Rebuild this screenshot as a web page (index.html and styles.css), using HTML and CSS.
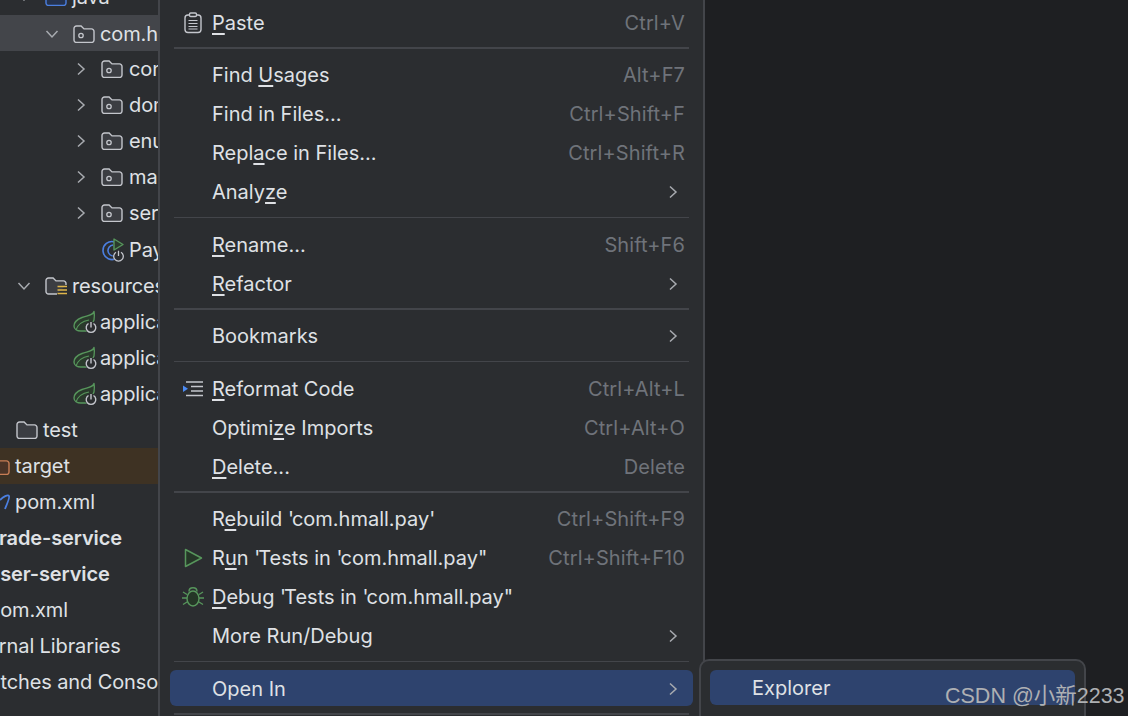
FILE: index.html
```html
<!DOCTYPE html>
<html lang="en">
<head>
<meta charset="utf-8">
<title>Open In menu</title>
<link rel="stylesheet" href="styles.css">
</head>
<body>
<svg class="defs" aria-hidden="true">
  <symbol id="folder" viewBox="0 0 22 18"><path d="M1 3.500a2.500 2.500 0 0 1 2.500-2.500h4.600l2.900 2.900h7.500a2.500 2.500 0 0 1 2.500 2.500v8.600a2.500 2.500 0 0 1-2.500 2.500H3.500a2.500 2.500 0 0 1-2.500-2.500z" fill="#3b3d42" stroke="#c4c6cc" stroke-width="1.400"/></symbol>
  <symbol id="pkg" viewBox="0 0 22 18"><path d="M1 3.500a2.500 2.500 0 0 1 2.500-2.500h4.600l2.900 2.900h7.500a2.500 2.500 0 0 1 2.500 2.500v8.600a2.500 2.500 0 0 1-2.500 2.500H3.500a2.500 2.500 0 0 1-2.500-2.500z" fill="#3b3d42" stroke="#c4c6cc" stroke-width="1.400"/><circle cx="8" cy="10.500" r="2.200" fill="none" stroke="#c4c6cc" stroke-width="1.300"/></symbol>
  <symbol id="spring" viewBox="0 0 24 24"><path d="M21 1.500c-1 4-7 4-12 6C4 9.500 1 12 1 16c0 3 3 5 7 5h6l4-5 3-6c.5-3 .5-6 0-8.500z" fill="#2a3a2c" stroke="#57965c" stroke-width="1.400" stroke-linejoin="round"/><path d="M3 20c2-6 7-9 13-10" fill="none" stroke="#57965c" stroke-width="1.200"/><circle cx="18" cy="17.500" r="6" fill="#2b2d30"/><path d="M15.500 13.500a4.800 4.800 0 1 0 5 0M18 12v5.500" fill="none" stroke="#c4c6cc" stroke-width="1.400"/></symbol>
  <symbol id="chev-r" viewBox="0 0 12 14"><path d="M3 1.500 9 7l-6 5.500" fill="none" stroke="#a8abb0" stroke-width="1.500"/></symbol>
  <symbol id="chev-d" viewBox="0 0 14 12"><path d="M1.500 3 7 9l5.500-6" fill="none" stroke="#a8abb0" stroke-width="1.500"/></symbol>
</svg>

<div class="window">
  <aside class="tree">
    <div class="tree-list">
      <div class="row l2"><svg class="chev"><use href="#chev-d"/></svg><svg class="ico" viewBox="0 0 22 18"><path d="M1 3.500a2.500 2.500 0 0 1 2.500-2.500h4.600l2.900 2.900h7.500a2.500 2.500 0 0 1 2.500 2.500v8.600a2.500 2.500 0 0 1-2.500 2.500H3.500a2.500 2.500 0 0 1-2.500-2.500z" fill="#25324d" stroke="#4b7fe0" stroke-width="1.400"/></svg><span>java</span></div>
      <div class="row l3 hover"><svg class="chev"><use href="#chev-d"/></svg><svg class="ico"><use href="#pkg"/></svg><span>com.hmall.pay</span></div>
      <div class="row l4"><svg class="chev-side"><use href="#chev-r"/></svg><svg class="ico"><use href="#pkg"/></svg><span>config</span></div>
      <div class="row l4"><svg class="chev-side"><use href="#chev-r"/></svg><svg class="ico"><use href="#pkg"/></svg><span>domain</span></div>
      <div class="row l4"><svg class="chev-side"><use href="#chev-r"/></svg><svg class="ico"><use href="#pkg"/></svg><span>enums</span></div>
      <div class="row l4"><svg class="chev-side"><use href="#chev-r"/></svg><svg class="ico"><use href="#pkg"/></svg><span>mapper</span></div>
      <div class="row l4"><svg class="chev-side"><use href="#chev-r"/></svg><svg class="ico"><use href="#pkg"/></svg><span>service</span></div>
      <div class="row l4">
        <svg class="ico ico-lg" viewBox="0 0 24 24"><path d="M14 4a9 9 0 1 0 2 16" fill="none" stroke="#4b7fe0" stroke-width="1.600"/><path d="M12 7a5.500 5.500 0 1 0 1 11" fill="none" stroke="#4b7fe0" stroke-width="1.600"/><path d="M13 1v11l9-5.500z" fill="#2a3a2c" stroke="#57965c" stroke-width="1.400" stroke-linejoin="round"/><circle cx="17.500" cy="18" r="5.800" fill="#2b2d30"/><path d="M15 14.200a4.800 4.800 0 1 0 5 0M17.500 12.700V18" fill="none" stroke="#c4c6cc" stroke-width="1.300"/></svg>
        <span>PayApplication</span></div>
      <div class="row l2"><svg class="chev"><use href="#chev-d"/></svg>
        <svg class="ico" viewBox="0 0 22 18"><path d="M12 17H3.500A2.500 2.500 0 0 1 1 14.500v-11A2.500 2.500 0 0 1 3.500 1h4.600l2.900 2.900h7.500A2.500 2.500 0 0 1 21 6.400V8" fill="#3b3d42" stroke="#c4c6cc" stroke-width="1.400"/><path d="M12.500 9.500H22M12.500 13H22M12.500 16.500H22" stroke="#e0b64a" stroke-width="1.600"/></svg>
        <span>resources</span></div>
      <div class="row l3"><svg class="ico ico-lg"><use href="#spring"/></svg><span>application.yaml</span></div>
      <div class="row l3"><svg class="ico ico-lg"><use href="#spring"/></svg><span>application-dev.yaml</span></div>
      <div class="row l3"><svg class="ico ico-lg"><use href="#spring"/></svg><span>application-local.yaml</span></div>
      <div class="row l1"><svg class="ico"><use href="#folder"/></svg><span>test</span></div>
      <div class="row l0 excluded"><svg class="ico" viewBox="0 0 22 18"><path d="M1 3.500a2.500 2.500 0 0 1 2.500-2.500h4.600l2.900 2.900h7.500a2.500 2.500 0 0 1 2.500 2.500v8.600a2.500 2.500 0 0 1-2.500 2.500H3.500a2.500 2.500 0 0 1-2.500-2.500z" fill="#4a3427" stroke="#c77d55" stroke-width="1.400"/></svg><span>target</span></div>
      <div class="row l0"><svg class="ico" viewBox="0 0 22 18"><path d="M12 7c3-3 8-6 9-4 1 1.500-2 8-4 13" fill="none" stroke="#4b7fe0" stroke-width="1.800"/></svg><span>pom.xml</span></div>
      <div class="row bold lt"><span>trade-service</span></div>
      <div class="row bold lm"><span>user-service</span></div>
      <div class="row lm"><span>pom.xml</span></div>
      <div class="row lx"><span>External Libraries</span></div>
      <div class="row lx"><span>Scratches and Consoles</span></div>
    </div>
  </aside>

  <nav class="menu">
    <div class="item"><span class="slot"><svg class="mi" viewBox="0 0 22 22"><rect x="3" y="3" width="16" height="17.500" rx="3" fill="none" stroke="#c4c6cc" stroke-width="1.400"/><rect x="7.500" y="1" width="7" height="3.500" rx="1.200" fill="#2b2d30" stroke="#c4c6cc" stroke-width="1.400"/><path d="M6.500 8.500h9M6.500 11.500h9M6.500 14.500h9M6.500 17h9" stroke="#c4c6cc" stroke-width="1.200"/></svg></span><span class="label"><u>P</u>aste</span><span class="keys">Ctrl+V</span></div>
    <div class="sep thick"></div>
    <div class="item"><span class="slot"></span><span class="label">Find <u>U</u>sages</span><span class="keys">Alt+F7</span></div>
    <div class="item"><span class="slot"></span><span class="label">Find in Files...</span><span class="keys">Ctrl+Shift+F</span></div>
    <div class="item"><span class="slot"></span><span class="label">Repl<u>a</u>ce in Files...</span><span class="keys">Ctrl+Shift+R</span></div>
    <div class="item"><span class="slot"></span><span class="label">Analy<u>z</u>e</span><svg class="arrow"><use href="#chev-r"/></svg></div>
    <div class="sep"></div>
    <div class="item"><span class="slot"></span><span class="label"><u>R</u>ename...</span><span class="keys">Shift+F6</span></div>
    <div class="item"><span class="slot"></span><span class="label"><u>R</u>efactor</span><svg class="arrow"><use href="#chev-r"/></svg></div>
    <div class="sep thick"></div>
    <div class="item"><span class="slot"></span><span class="label">Bookmarks</span><svg class="arrow"><use href="#chev-r"/></svg></div>
    <div class="sep"></div>
    <div class="item"><span class="slot"><svg class="mi" viewBox="0 0 22 22"><path d="M5 4h17M10 8.500h12M10 13h12M5 17.500h17" stroke="#c4c6cc" stroke-width="1.400" transform="translate(-1 0)"/><path d="M1 7.500v6.500l5-3.200z" fill="#4b8bf5"/></svg></span><span class="label"><u>R</u>eformat Code</span><span class="keys">Ctrl+Alt+L</span></div>
    <div class="item"><span class="slot"></span><span class="label">Optimi<u>z</u>e Imports</span><span class="keys">Ctrl+Alt+O</span></div>
    <div class="item"><span class="slot"></span><span class="label"><u>D</u>elete...</span><span class="keys">Delete</span></div>
    <div class="sep thick"></div>
    <div class="item"><span class="slot"></span><span class="label">R<u>e</u>build <span class="q">'</span>com.hmall.pay<span class="q">'</span></span><span class="keys">Ctrl+Shift+F9</span></div>
    <div class="item"><span class="slot"><svg class="mi" viewBox="0 0 22 22"><path d="M3.500 2.500v17L19.500 11z" fill="#253627" stroke="#57965c" stroke-width="1.500" stroke-linejoin="round"/></svg></span><span class="label">R<u>u</u>n <span class="q">'</span>Tests in <span class="q">'</span>com.hmall.pay<span class="q">"</span></span><span class="keys">Ctrl+Shift+F10</span></div>
    <div class="item"><span class="slot"><svg class="mi" viewBox="0 0 22 22"><ellipse cx="11" cy="12.500" rx="6" ry="7.500" fill="#253627" stroke="#57965c" stroke-width="1.400"/><path d="M7 5.500c0-5 8-5 8 0M0 12h5M17 12h5M1 6l4 2.500M21 6l-4 2.500M1 18.500 5 16M21 18.500 17 16" fill="none" stroke="#57965c" stroke-width="1.400"/></svg></span><span class="label"><u>D</u>ebug <span class="q">'</span>Tests in <span class="q">'</span>com.hmall.pay<span class="q">"</span></span></div>
    <div class="item"><span class="slot"></span><span class="label">More Run/Debug</span><svg class="arrow"><use href="#chev-r"/></svg></div>
    <div class="sep"></div>
    <div class="item selected"><span class="slot"></span><span class="label">Open In</span><svg class="arrow"><use href="#chev-r"/></svg></div>
    <div class="sep thick"></div>
  </nav>

  <main class="editor"></main>

  <div class="submenu">
    <div class="subitem">Explorer</div>
  </div>
  <div class="watermark">CSDN @小新2233</div>
</div>
</body>
</html>
```

FILE: styles.css
```css
* { box-sizing: border-box; }

html, body {
  margin: 0;
  height: 100%;
  overflow: hidden;
  background: #1e1f22;
}

.defs { display: none; }

.window {
  position: relative;
  display: flex;
  height: 716px;
  overflow: hidden;
  font-family: Inter, "Noto Sans", sans-serif;
  font-size: 20px;
  color: #dfe1e5;
}

/* project tree */
.tree {
  flex: 0 0 158px;
  overflow: hidden;
  background: #2b2d30;
  letter-spacing: -0.12px;
}

.tree-list {
  margin-top: -20.83px;
}

.row {
  position: relative;
  display: flex;
  align-items: center;
  gap: 5px;
  height: 36.05px;
  white-space: nowrap;
}

.l0 { margin-left: -12px; width: 170px; }
.l1 { padding-left: 16px; }
.l2 { padding-left: 45px; }
.l3 { padding-left: 73px; }
.l4 { padding-left: 101px; gap: 6px; }
.lt { margin-left: -8px; }
.lm { margin-left: -12px; }
.lx { margin-left: -42px; }

.hover {
  padding-top: 1px;
  background: #43454a;
}
.excluded { background: #3e3223; }
.bold { font-weight: 600; }

.ico {
  flex: 0 0 22px;
  width: 22px;
  height: 18px;
}

.ico-lg {
  flex-basis: 24px;
  width: 24px;
  height: 24px;
  margin-right: -2px;
}

.chev {
  position: absolute;
  width: 14px;
  height: 12px;
  margin-left: -28px;
}

.chev-side {
  position: absolute;
  width: 12px;
  height: 14px;
  margin-left: -26px;
}

/* context menu */
.menu {
  flex: 0 0 547px;
  padding: 3.5px 10px 0;
  background: #2b2d30;
  border-left: 2px solid #43454a;
  border-right: 2px solid #43454a;
}

.item {
  display: flex;
  align-items: center;
  height: 39px;
  padding-right: 8px;
  white-space: nowrap;
}

.slot {
  flex: 0 0 42px;
  display: flex;
  padding-left: 12px;
}

.label { flex: 1; }

.label u {
  text-decoration-thickness: 2px;
  text-underline-offset: 3px;
}

.q { margin-right: -2px; }

.keys {
  color: #6f737a;
  letter-spacing: 0.1px;
}

.mi { width: 22px; height: 22px; }

.arrow {
  width: 12px;
  height: 14px;
  margin-right: 6px;
}

.selected {
  height: 36px;
  margin: 1px 0 2px;
  padding-top: 2px;
  border-radius: 6px;
  background: #2e436e;
}

.sep {
  height: 13.4px;
  margin: 0 4px;
  display: flex;
  align-items: center;
}

.sep::before {
  content: "";
  flex: 1;
  height: 1px;
  margin-bottom: 2px;
  background: #43454a;
}

.sep.thick::before { height: 2px; }

.editor {
  flex: 1;
  background: #1e1f22;
}

/* overlays */
.submenu {
  position: absolute;
  left: 699px;
  top: 659px;
  width: 387px;
  height: 90px;
  padding: 9px 9px 0;
  background: #2b2d30;
  border: 2px solid #43454a;
  border-radius: 10px;
}

.subitem {
  display: flex;
  align-items: center;
  height: 35px;
  padding-left: 42px;
  border-radius: 6px;
  background: #2e436e;
}

.watermark {
  position: absolute;
  left: 945px;
  top: 678px;
  font-family: "Liberation Sans", "Noto Sans CJK SC", sans-serif;
  font-size: 21.5px;
  color: #aeb0b3;
  white-space: nowrap;
}
```
